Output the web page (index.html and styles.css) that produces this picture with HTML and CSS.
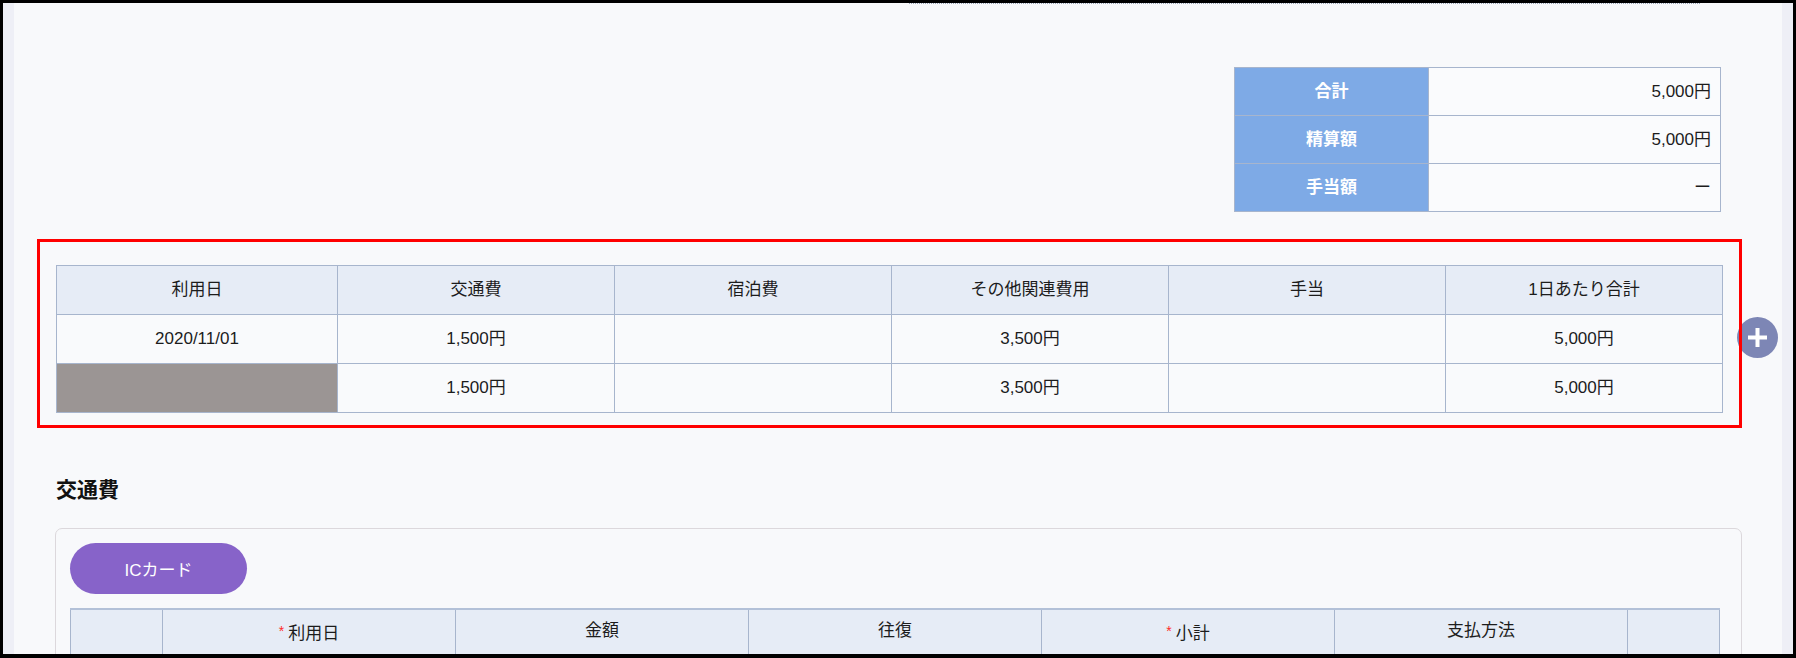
FILE: index.html
```html
<!DOCTYPE html>
<html lang="ja">
<head>
    <meta charset="UTF-8">
    <meta name="viewport" content="width=device-width, initial-scale=1.0">
    <title>経費精算</title>
    <link rel="stylesheet" href="styles.css">
</head>
<body>
    <div class="screen">
        <div class="rail"></div>

        <div class="page">
            <div class="top-rule"></div>

            <!-- 合計 -->
            <table class="summary">
                <tr><th>合計</th><td>5,000円</td></tr>
                <tr><th>精算額</th><td>5,000円</td></tr>
                <tr><th>手当額</th><td>ー</td></tr>
            </table>

            <!-- 日別合計 -->
            <div class="daily">
                <table class="grid">
                    <colgroup>
                        <col class="col-date">
                        <col><col><col><col><col>
                    </colgroup>
                    <tr>
                        <th>利用日</th>
                        <th>交通費</th>
                        <th>宿泊費</th>
                        <th>その他関連費用</th>
                        <th>手当</th>
                        <th>1日あたり合計</th>
                    </tr>
                    <tr>
                        <td>2020/11/01</td>
                        <td>1,500円</td>
                        <td></td>
                        <td>3,500円</td>
                        <td></td>
                        <td>5,000円</td>
                    </tr>
                    <tr>
                        <td class="masked"></td>
                        <td>1,500円</td>
                        <td></td>
                        <td>3,500円</td>
                        <td></td>
                        <td>5,000円</td>
                    </tr>
                </table>
                <button class="add-btn" aria-label="追加">
                    <svg width="41" height="41" viewBox="0 0 41 41">
                        <circle cx="20.5" cy="20.5" r="20.5" fill="#7d86b5"/>
                        <path d="M20.5 11v19M11 20.5h19" stroke="#fff" stroke-width="4"/>
                    </svg>
                </button>
            </div>

            <!-- 交通費 -->
            <h2 class="section-title">交通費</h2>
            <div class="card">
                <button class="ic-btn">ICカード</button>
                <table class="grid transport">
                    <colgroup>
                        <col class="w-narrow">
                        <col class="w-wide"><col class="w-wide"><col class="w-wide">
                        <col class="w-wide"><col class="w-wide">
                        <col class="w-narrow">
                    </colgroup>
                    <tr>
                        <th></th>
                        <th><span class="req">*</span>利用日</th>
                        <th>金額</th>
                        <th>往復</th>
                        <th><span class="req">*</span>小計</th>
                        <th>支払方法</th>
                        <th></th>
                    </tr>
                </table>
            </div>
        </div>

        <div class="rail"></div>
    </div>
</body>
</html>
```

FILE: styles.css
```css
body {
    margin: 0;
    font-family: 'Liberation Sans', 'Noto Sans CJK JP', sans-serif;
    font-size: 17px;
    line-height: 24px;
    color: #1c1c1c;
}

.screen {
    display: flex;
    height: 658px;
    box-sizing: border-box;
    border: 3px solid #000;
    border-bottom-width: 4px;
    overflow: hidden;
}

.rail {
    width: 11px;
    flex-shrink: 0;
    background: #eeeff6;
}

.page {
    flex: 1;
    background: #f8f9fb;
    overflow: hidden;
}

.top-rule {
    margin-left: 895px;
    width: 791px;
    border-top: 1px dotted #98a2b4;
}

/* 合計テーブル */
.summary {
    width: 487px;
    margin: 63px 61px 0 auto;
    border-collapse: collapse;
    table-layout: fixed;
}

.summary th,
.summary td {
    height: 48px;
    box-sizing: border-box;
    padding: 0;
    border: 1px solid #a7b5cd;
}

.summary th {
    width: 194px;
    background: #7eaae6;
    color: #fff;
    font-weight: bold;
    text-align: center;
}

.summary td {
    background: #fafbfd;
    text-align: right;
    padding-right: 9px;
}

/* 一覧テーブル */
.grid {
    width: 100%;
    border-collapse: collapse;
    table-layout: fixed;
}

.grid th,
.grid td {
    height: 49px;
    box-sizing: border-box;
    padding: 0;
    border: 1px solid #a7b5cd;
    text-align: center;
    font-weight: normal;
}

.grid th {
    background: #e6ecf6;
}

.grid td {
    background: #f9fafc;
}

.grid td.masked {
    background: #9b9594;
}

.col-date {
    width: 281px;
}

.daily {
    position: relative;
    margin: 27px 40px 0 23px;
    padding: 26px 19px 15px 19px;
}

.daily::after {
    content: '';
    position: absolute;
    inset: 0;
    border: 3px solid #ff0000;
    pointer-events: none;
    z-index: 2;
}

.add-btn {
    position: absolute;
    left: 1700px;
    top: 78px;
    z-index: 1;
    width: 41px;
    height: 41px;
    padding: 0;
    border: none;
    background: none;
    cursor: pointer;
}

.add-btn svg {
    display: block;
}

/* 交通費 */
.section-title {
    margin: 47px 0 0 42px;
    font-size: 21px;
    line-height: 30px;
    font-weight: bold;
    color: #111;
}

.card {
    margin: 23px 40px 0 41px;
    padding: 14px 23px 0 14px;
    height: 200px;
    border: 1px solid #dcd8dc;
    border-radius: 7px;
}

.ic-btn {
    display: block;
    width: 177px;
    height: 51px;
    border: none;
    border-radius: 26px;
    background: #8763c9;
    color: #fff;
    font-family: inherit;
    font-size: 17px;
    cursor: pointer;
}

.transport {
    margin-top: 14px;
    border-top: 2px solid #b3c1d8;
}

.transport th {
    vertical-align: top;
    padding-top: 9px;
}

.w-narrow {
    width: 92px;
}

.w-wide {
    width: 293px;
}

.req {
    color: #ff2a2a;
    font-size: 14px;
    vertical-align: 3px;
    margin-right: 4px;
}
```
